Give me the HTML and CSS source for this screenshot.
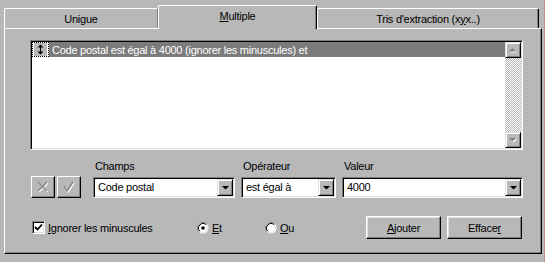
FILE: index.html
```html
<!DOCTYPE html>
<html lang="fr">
<head>
<meta charset="utf-8">
<title>Multiple</title>
<link rel="stylesheet" href="styles.css">
</head>
<body>
<div class="screen">
  <div class="dialog">
    <div class="tabs">
      <div class="tab tab-unique">Unigue</div>
      <div class="tab tab-multi"><span><u>M</u>ultiple</span></div>
      <div class="tab tab-tris">Tris d'extraction (x<u>y</u>x..)</div>
    </div>
    <div class="panel">
      <div class="listbox">
        <div class="list-area">
          <div class="row">
            <span class="row-icon"><span class="mini-btn"><svg width="7" height="11" viewBox="0 0 7 11"><path d="M3.5 0.5 L6.5 3.5 H0.5 Z M3.5 10.5 L6.5 7.5 H0.5 Z" fill="#000"/><rect x="3" y="3" width="1" height="5" fill="#000"/></svg></span></span>
            <span class="row-text">Code postal est égal à 4000 (ignorer les minuscules) et</span>
          </div>
        </div>
        <div class="vscroll">
          <div class="sbtn"><svg width="8" height="5" viewBox="0 0 8 5"><path d="M4.5 1 L8 4.5 H1 Z" fill="#fff"/><path d="M3.5 0 L7 3.5 H0 Z" fill="#808080"/></svg></div>
          <div class="track"></div>
          <div class="sbtn"><svg width="8" height="5" viewBox="0 0 8 5"><path d="M1 1 H8 L4.5 4.5 Z" fill="#fff"/><path d="M0 0 H7 L3.5 3.5 Z" fill="#808080"/></svg></div>
        </div>
      </div>

      <div class="criteria">
        <div class="tool-btn"><svg width="13" height="12" viewBox="0 0 13 12"><path d="M2 2 L11 11 M11 2 L2 11" stroke="#fff" stroke-width="1.3"/><path d="M1 1 L10 10 M10 1 L1 10" stroke="#808080" stroke-width="1.3"/></svg></div>
        <div class="tool-btn"><svg width="13" height="12" viewBox="0 0 13 12"><path d="M2 6 L5 11 L11 2" stroke="#fff" stroke-width="1.4" fill="none"/><path d="M1 5 L4 10 L10 1" stroke="#808080" stroke-width="1.4" fill="none"/></svg></div>
        <div class="field f-champs">
          <div class="label">Champs</div>
          <div class="combo"><span class="combo-text">Code postal</span><span class="drop"><svg width="7" height="4" viewBox="0 0 7 4"><path d="M0 0 H7 L3.5 3.5 Z" fill="#000"/></svg></span></div>
        </div>
        <div class="field f-op">
          <div class="label">Opérateur</div>
          <div class="combo"><span class="combo-text">est égal à</span><span class="drop"><svg width="7" height="4" viewBox="0 0 7 4"><path d="M0 0 H7 L3.5 3.5 Z" fill="#000"/></svg></span></div>
        </div>
        <div class="field f-val">
          <div class="label">Valeur</div>
          <div class="combo"><span class="combo-text">4000</span><span class="drop"><svg width="7" height="4" viewBox="0 0 7 4"><path d="M0 0 H7 L3.5 3.5 Z" fill="#000"/></svg></span></div>
        </div>
      </div>

      <div class="bottom">
        <div class="chk-group">
          <span class="checkbox"><svg width="9" height="9" viewBox="0 0 9 9"><path d="M1 4 L3.5 6.5 L8 1.5" stroke="#000" stroke-width="1.8" fill="none"/></svg></span>
          <span class="opt-label"><u>I</u>gnorer les minuscules</span>
        </div>
        <div class="radio-group r-et">
          <svg class="radio" width="12" height="12" viewBox="0 0 12 12"><circle cx="6" cy="6" r="5.5" fill="#fff"/><path d="M2.11 9.89 A5.5 5.5 0 0 1 9.89 2.11" stroke="#808080" fill="none"/><path d="M2.82 9.18 A4.5 4.5 0 0 1 9.18 2.82" stroke="#000" fill="none"/><path d="M9.18 2.82 A4.5 4.5 0 0 1 2.82 9.18" stroke="#dfdfdf" fill="none"/><circle cx="6" cy="6" r="1.8" fill="#000"/></svg>
          <span class="opt-label"><u>E</u>t</span>
        </div>
        <div class="radio-group r-ou">
          <svg class="radio" width="12" height="12" viewBox="0 0 12 12"><circle cx="6" cy="6" r="5.5" fill="#fff"/><path d="M2.11 9.89 A5.5 5.5 0 0 1 9.89 2.11" stroke="#808080" fill="none"/><path d="M2.82 9.18 A4.5 4.5 0 0 1 9.18 2.82" stroke="#000" fill="none"/><path d="M9.18 2.82 A4.5 4.5 0 0 1 2.82 9.18" stroke="#dfdfdf" fill="none"/></svg>
          <span class="opt-label"><u>O</u>u</span>
        </div>
        <div class="buttons">
          <div class="btn"><u>A</u>jouter</div>
          <div class="btn">Efface<u>r</u></div>
        </div>
      </div>
    </div>
  </div>
  <div class="edge"></div>
</div>
</body>
</html>
```

FILE: styles.css
```css
html, body {
  margin: 0;
  padding: 0;
}
body {
  background: #b8b8b8;
  font-family: "Liberation Sans", Arial, sans-serif;
  font-size: 11px;
  letter-spacing: -0.25px;
  color: #000;
}
.screen {
  display: flex;
  width: 545px;
  height: 262px;
  overflow: hidden;
}
.dialog {
  width: 544px;
  box-sizing: border-box;
  padding: 5px 0 0 4px;
}
.edge {
  width: 1px;
  background: #c98a8a;
}

/* tabs */
.tabs {
  display: flex;
  align-items: flex-end;
  height: 24px;
  margin-bottom: -1px;
  position: relative;
  z-index: 1;
}
.tab {
  box-sizing: border-box;
  height: 20px;
  margin-bottom: 1px;
  border-top: 1px solid #fff;
  border-left: 1px solid #fff;
  border-right: 1px solid #808080;
  border-radius: 2px 2px 0 0;
  display: flex;
  align-items: center;
  justify-content: center;
  background: #b8b8b8;
}
.tab-unique {
  width: 154px;
}
.tab-multi {
  width: 159px;
  height: 24px;
  margin-bottom: 0;
  padding-bottom: 3px;
  border-right: 1px solid #000;
  box-shadow: inset -1px 0 #808080;
}
.tab-tris {
  width: 222px;
  border-right: 1px solid #000;
  box-shadow: inset -1px 0 #808080;
}

/* panel */
.panel {
  box-sizing: border-box;
  width: 538px;
  height: 226px;
  border: 1px solid;
  border-color: #fff #000 #000 #fff;
  box-shadow: inset -1px -1px #808080;
}

/* list */
.listbox {
  box-sizing: border-box;
  margin: 11px 0 0 25px;
  width: 493px;
  height: 110px;
  border: 1px solid;
  border-color: #808080 #fff #fff #808080;
  box-shadow: inset 1px 1px #000, inset -1px -1px #dfdfdf;
  padding: 1px;
  display: flex;
  background: #fff;
}
.list-area {
  flex: 1;
  background: #fff;
}
.row {
  height: 15px;
  display: flex;
  align-items: center;
  background: #7b7b7b;
  color: #fff;
}
.row-icon {
  box-sizing: border-box;
  width: 17px;
  height: 15px;
  border: 1px dotted #000;
  background: #fff;
  display: flex;
  align-items: center;
  justify-content: center;
}
.mini-btn {
  width: 13px;
  height: 13px;
  background: #b8b8b8;
  display: flex;
  align-items: center;
  justify-content: center;
}
.row-text {
  margin-left: 3px;
  white-space: nowrap;
}
.vscroll {
  width: 16px;
  display: flex;
  flex-direction: column;
}
.sbtn {
  box-sizing: border-box;
  height: 16px;
  border: 1px solid;
  border-color: #dfdfdf #000 #000 #dfdfdf;
  box-shadow: inset 1px 1px #fff, inset -1px -1px #808080;
  background: #b8b8b8;
  display: flex;
  align-items: center;
  justify-content: center;
}
.track {
  flex: 1;
  background: repeating-conic-gradient(#fff 0 25%, #b8b8b8 0 50%) 0 0 / 2px 2px;
}

/* criteria row */
.criteria {
  display: flex;
  align-items: flex-end;
  margin: 9px 0 0 26px;
}
.tool-btn {
  box-sizing: border-box;
  width: 24px;
  height: 22px;
  border: 1px solid;
  border-color: #fff #000 #000 #fff;
  box-shadow: inset -1px -1px #808080;
  display: flex;
  align-items: center;
  justify-content: center;
}
.tool-btn + .tool-btn {
  margin-left: 2px;
}
.field {
  display: flex;
  flex-direction: column;
}
.f-champs {
  width: 142px;
  margin-left: 12px;
}
.f-op {
  width: 95px;
  margin-left: 6px;
}
.f-val {
  width: 181px;
  margin-left: 6px;
}
.label {
  height: 14px;
  line-height: 14px;
  margin-bottom: 4px;
  padding-left: 2px;
}
.combo {
  box-sizing: border-box;
  height: 21px;
  border: 1px solid;
  border-color: #808080 #fff #fff #808080;
  box-shadow: inset 1px 1px #000, inset -1px -1px #dfdfdf;
  padding: 1px;
  display: flex;
  background: #fff;
}
.combo-text {
  flex: 1;
  padding-left: 3px;
  line-height: 17px;
  white-space: nowrap;
}
.drop {
  box-sizing: border-box;
  width: 16px;
  height: 17px;
  border: 1px solid;
  border-color: #dfdfdf #000 #000 #dfdfdf;
  box-shadow: inset 1px 1px #fff, inset -1px -1px #808080;
  background: #b8b8b8;
  display: flex;
  align-items: center;
  justify-content: center;
}

/* bottom row */
.bottom {
  display: flex;
  align-items: center;
  height: 23px;
  margin-top: 18px;
  padding-left: 27px;
}
.chk-group {
  display: flex;
  align-items: center;
  width: 165px;
}
.checkbox {
  box-sizing: border-box;
  width: 13px;
  height: 13px;
  border: 1px solid;
  border-color: #808080 #fff #fff #808080;
  box-shadow: inset 1px 1px #000, inset -1px -1px #dfdfdf;
  background: #fff;
  display: flex;
  align-items: center;
  justify-content: center;
}
.opt-label {
  margin-left: 3px;
  white-space: nowrap;
}
.radio-group {
  display: flex;
  align-items: center;
}
.r-et {
  width: 68px;
}
.radio {
  display: block;
}
.buttons {
  margin-left: auto;
  margin-right: 19px;
  display: flex;
  gap: 6px;
}
.btn {
  box-sizing: border-box;
  width: 75px;
  height: 23px;
  border: 1px solid;
  border-color: #fff #000 #000 #fff;
  box-shadow: inset -1px -1px #808080, inset 1px 1px #dfdfdf;
  display: flex;
  align-items: center;
  justify-content: center;
}
```
